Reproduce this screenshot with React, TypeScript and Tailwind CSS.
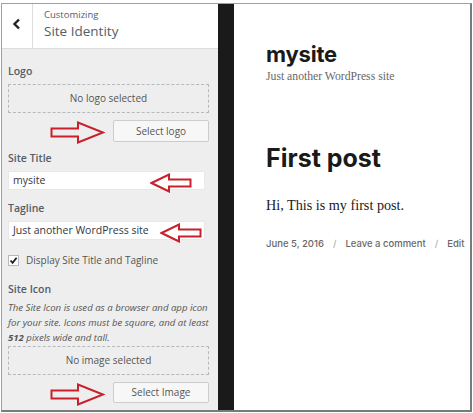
import React from 'react'

const sans = { fontFamily: '"Open Sans", "Liberation Sans", sans-serif' }

function RightArrow({ className }: { className: string }) {
  return (
    <svg className={className} width="55" height="23" viewBox="0 0 55 23" fill="none">
      <polygon
        points="1.5,7.5 28,7.5 28,1.5 53,11.5 28,21.5 28,15.5 1.5,15.5"
        stroke="#c9202b"
        strokeWidth="2"
        strokeLinejoin="miter"
      />
    </svg>
  )
}

function LeftArrow({ className }: { className: string }) {
  return (
    <svg className={className} width="42" height="20" viewBox="0 0 42 20" fill="none">
      <polygon
        points="40.5,6.5 19,6.5 19,1.5 1.5,10 19,18.5 19,13.5 40.5,13.5"
        stroke="#c9202b"
        strokeWidth="2"
      />
    </svg>
  )
}

function Label({ children, className = '' }: { children: React.ReactNode; className?: string }) {
  return <div className={`h-[14px] leading-[14px] text-[10.5px] font-semibold text-[#555d66] ${className}`}>{children}</div>
}

export default function App() {
  return (
    <div className="w-[473px] h-[413px] bg-white pt-[3px] pl-[1px]" style={sans}>
      <div className="flex w-[471px] h-[409px] border-t border-l border-[#a0a0a0] border-r-2 border-b-2 border-r-[#7a7a7a] border-b-[#7a7a7a]">
        {/* customizer sidebar */}
        <div className="relative w-[216px] h-full bg-[#eeeeee] flex flex-col">
          <div className="flex h-[45px] bg-white border-b border-[#dddddd]">
            <div className="w-[31px] h-full border-r border-[#dddddd] flex justify-center pt-[14px]">
              <svg width="10" height="12" viewBox="0 0 10 12">
                <path d="M7 1.5 L2.5 6 L7 10.5" stroke="#222" strokeWidth="2.4" fill="none" />
              </svg>
            </div>
            <div className="pl-[11px] pt-[4px]">
              <div className="text-[9.5px] leading-[14px] text-[#555d66]">Customizing</div>
              <div className="text-[13.5px] leading-[20px] text-[#555d66] mt-[-1px]">Site Identity</div>
            </div>
          </div>

          <div className="pl-[6px] pr-[9px] flex flex-col">
            <Label className="mt-[15px]">Logo</Label>
            <div className="mt-[6px] h-[29px] border border-dashed border-[#b4b9be] flex items-center justify-center text-[10px] text-[#555]">
              No logo selected
            </div>
            <div className="mt-[7px] self-end w-[96px] h-[22px] bg-[#f7f7f7] border border-[#cccccc] rounded-[2px] flex items-center justify-center text-[10px] text-[#555]">
              Select logo
            </div>

            <Label className="mt-[9px]">Site Title</Label>
            <div className="mt-[6px] w-[197px] h-[19px] bg-white border border-[#e8e8e8] flex items-center pl-[4px] text-[10.5px] text-[#32373c]">
              mysite
            </div>

            <Label className="mt-[11px]">Tagline</Label>
            <div className="mt-[6px] w-[197px] h-[19px] bg-white border border-[#e8e8e8] flex items-center pl-[4px] text-[10.5px] text-[#32373c]">
              Just another WordPress site
            </div>

            <div className="mt-[13px] h-[14px] flex items-center gap-[7px] text-[10px] text-[#555]">
              <div className="w-[11px] h-[11px] bg-white border border-[#b4b9be] flex items-center justify-center">
                <svg width="9" height="9" viewBox="0 0 9 9">
                  <path d="M1.5 4.5 L3.6 6.8 L7.6 1.8" stroke="#1e1e1e" strokeWidth="1.8" fill="none" />
                </svg>
              </div>
              <span>Display Site Title and Tagline</span>
            </div>

            <Label className="mt-[15px]">Site Icon</Label>
            <div className="mt-[4px] text-[9.6px] leading-[15px] italic text-[#555]">
              The Site Icon is used as a browser and app icon for your site. Icons must be square, and at least{' '}
              <strong className="font-bold">512</strong> pixels wide and tall.
            </div>
            <div className="mt-[1px] h-[29px] border border-dashed border-[#b4b9be] flex items-center justify-center text-[10px] text-[#555]">
              No image selected
            </div>
            <div className="mt-[7px] self-end w-[96px] h-[21px] bg-[#f7f7f7] border border-[#cccccc] rounded-[2px] flex items-center justify-center text-[10px] text-[#555]">
              Select Image
            </div>
          </div>

          {/* annotation arrows */}
          <RightArrow className="absolute left-[48px] top-[117px]" />
          <LeftArrow className="absolute left-[148px] top-[169px]" />
          <LeftArrow className="absolute left-[158px] top-[219px]" />
          <RightArrow className="absolute left-[48px] top-[379px]" />
        </div>

        <div className="w-[16px] h-full bg-[#1a1a1a]" />

        {/* preview */}
        <div className="flex-1 h-full bg-white pl-[32px]">
          <div
            className="mt-[36px] text-[22px] leading-[28px] font-bold text-[#1a1a1a] tracking-[-0.2px]"
            style={{ fontFamily: 'Inter, "Liberation Sans", sans-serif' }}
          >
            mysite
          </div>
          <div className="mt-[1px] text-[11.7px] leading-[16px] text-[#686868]" style={{ fontFamily: '"Liberation Serif", serif' }}>
            Just another WordPress site
          </div>
          <div
            className="mt-[58px] text-[25px] leading-[30px] font-bold text-[#1a1a1a]"
            style={{ fontFamily: 'Inter, "Liberation Sans", sans-serif' }}
          >
            First post
          </div>
          <div className="mt-[23px] text-[14.2px] leading-[18px] text-[#1a1a1a]" style={{ fontFamily: '"Liberation Serif", serif' }}>
            Hi, This is my first post.
          </div>
          <div
            className="mt-[22px] flex items-center text-[9.5px] leading-[16px] font-medium text-[#686868]"
            style={{ fontFamily: 'Inter, "Liberation Sans", sans-serif' }}
          >
            <span>June 5, 2016</span>
            <span className="mx-[9px] text-[#b0b0b0]">/</span>
            <span>Leave a comment</span>
            <span className="mx-[9px] text-[#b0b0b0]">/</span>
            <span>Edit</span>
          </div>
        </div>
      </div>
    </div>
  )
}
